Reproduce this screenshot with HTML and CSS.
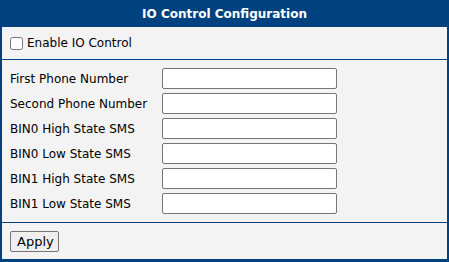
FILE: index.html
```html
<!DOCTYPE html>
<html lang="en">
  <head>
    <meta charset="UTF-8" />
    <meta name="viewport" content="width=device-width, initial-scale=1.0" />
    <title>IO Control Configuration</title>
    <link rel="stylesheet" href="styles.css">
  </head>
  <body>
    <form class="panel">
      <div class="panel-title">IO Control Configuration</div>

      <!-- Enable switch -->
      <div class="section">
        <label class="check">
          <input type="checkbox" name="enabled" />
          <span>Enable IO Control</span>
        </label>
      </div>

      <!-- SMS settings -->
      <div class="section fields">
        <label class="field-label" for="phone1">First Phone Number</label>
        <input class="field-input" id="phone1" type="text" />
        <label class="field-label" for="phone2">Second Phone Number</label>
        <input class="field-input" id="phone2" type="text" />
        <label class="field-label" for="bin0-high">BIN0 High State SMS</label>
        <input class="field-input" id="bin0-high" type="text" />
        <label class="field-label" for="bin0-low">BIN0 Low State SMS</label>
        <input class="field-input" id="bin0-low" type="text" />
        <label class="field-label" for="bin1-high">BIN1 High State SMS</label>
        <input class="field-input" id="bin1-high" type="text" />
        <label class="field-label" for="bin1-low">BIN1 Low State SMS</label>
        <input class="field-input" id="bin1-low" type="text" />
      </div>

      <div class="section actions">
        <button type="button" class="btn">Apply</button>
      </div>
    </form>
  </body>
</html>
```

FILE: styles.css
```css
body {
  margin: 0;
  padding: 0;
  font-family: 'DejaVu Sans', Verdana, sans-serif;
  font-size: 12px;
  color: #000000;
  background: #ffffff;
}

.panel {
  width: 449px;
  height: 262px;
  box-sizing: border-box;
  margin: 0;
  border: 2px solid #00427f;
  border-top: none;
  border-bottom-width: 3px;
  background: #f3f3f3;
}

.panel-title {
  height: 27px;
  margin: 0 -2px;
  background: #00427f;
  color: #ffffff;
  font-weight: bold;
  font-size: 12px;
  line-height: 28px;
  text-align: center;
}

.section {
  padding: 0 8px;
}

.section + .section {
  border-top: 1px solid #00427f;
}

.check {
  display: flex;
  align-items: center;
  height: 32px;
}

.check input {
  width: 13px;
  height: 13px;
  margin: 0 4px 0 0;
}

.fields {
  display: grid;
  grid-template-columns: 152px 175px;
  row-gap: 4px;
  align-items: center;
  padding-top: 8px;
  padding-bottom: 8px;
}

.field-input {
  box-sizing: border-box;
  width: 175px;
  height: 21px;
  margin: 0;
  border: 1px solid #767676;
  border-radius: 2px;
  background: #ffffff;
  font: inherit;
}

.actions {
  padding-top: 8px;
  padding-bottom: 7px;
}

.btn {
  box-sizing: border-box;
  height: 21px;
  width: 49px;
  margin: 0;
  padding: 0 6px;
  border: 1px solid #767676;
  border-radius: 2px;
  background: #efefef;
  font-family: inherit;
  font-size: 13px;
  color: #000000;
}
```
